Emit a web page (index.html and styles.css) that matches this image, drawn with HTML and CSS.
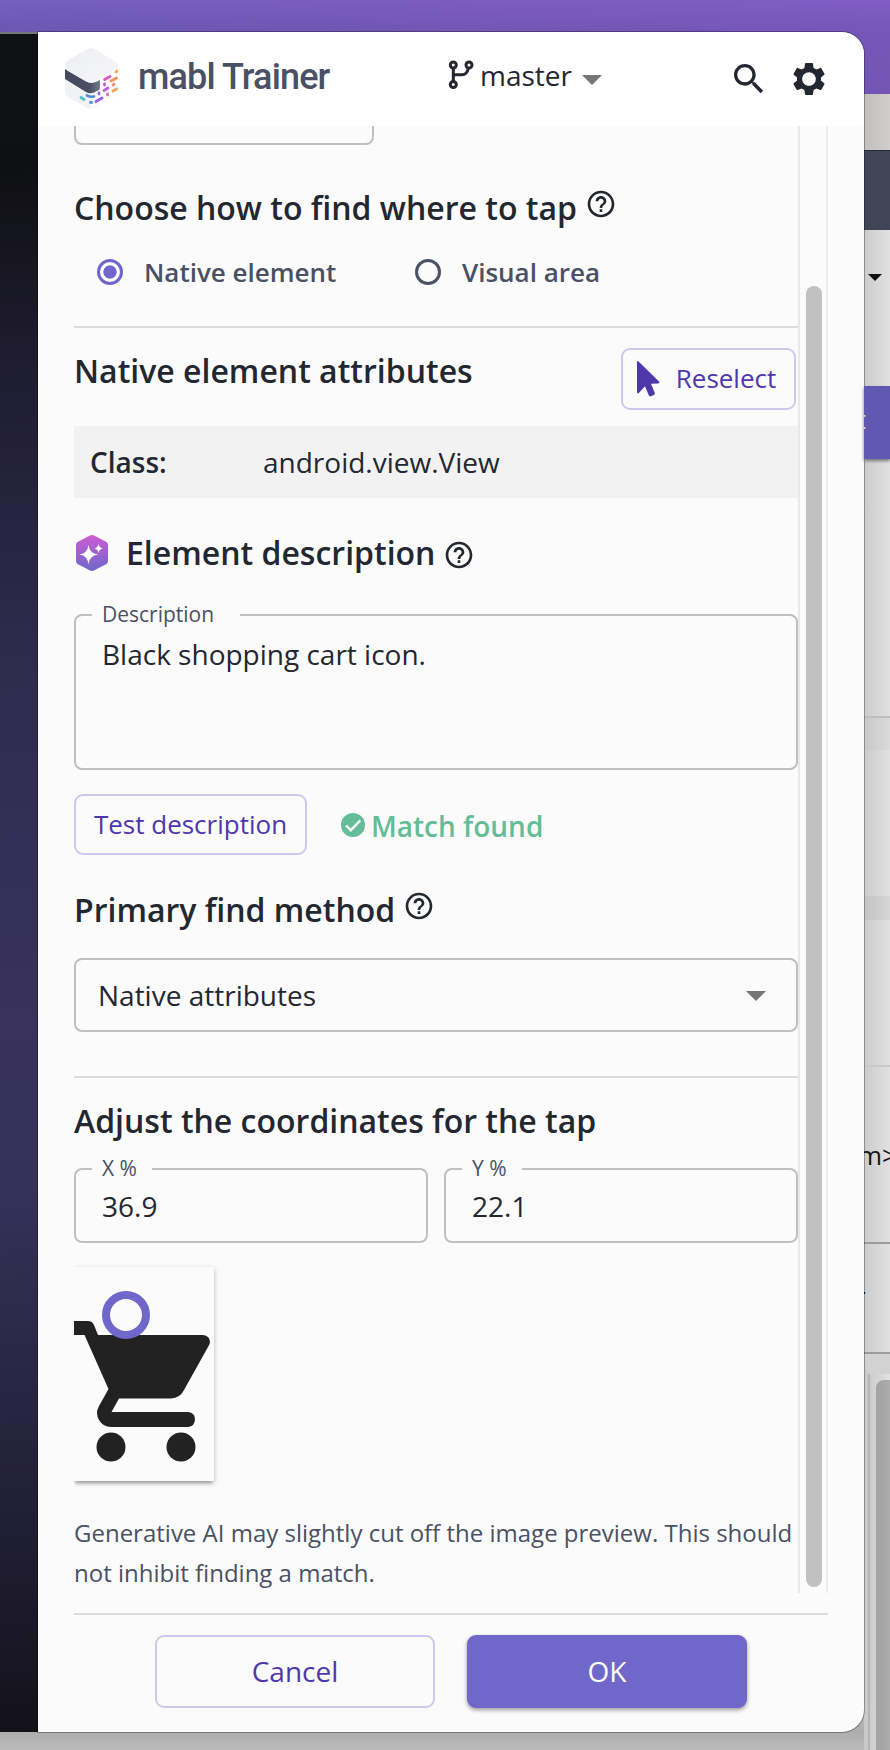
FILE: index.html
```
<!DOCTYPE html>
<html lang="en">
<head>
<meta charset="utf-8">
<title>mabl Trainer</title>
<link rel="stylesheet" href="styles.css">
</head>
<body>
<div class="desktop">
  <div class="back-window">
    <div class="bw-title"></div>
    <div class="bw-nav"></div>
    <div class="bw-row bw-menu"><span class="bw-caret"></span></div>
    <div class="bw-action">t</div>
    <div class="bw-row bw-space"></div>
    <div class="bw-row bw-band"></div>
    <div class="bw-row bw-card-a"></div>
    <div class="bw-row bw-band2"></div>
    <div class="bw-row bw-card-b"></div>
    <div class="bw-row bw-code"><span>m&gt;</span></div>
    <div class="bw-row bw-code2"><span>r</span></div>
    <div class="bw-row bw-scroll"><span></span></div>
  </div>
  <div class="device"></div>

  <main class="trainer">
    <header class="topbar">
      <svg class="logo" width="54" height="62" viewBox="0 0 54 62">
        <defs>
          <linearGradient id="top" x1="0" y1="0" x2="1" y2="1"><stop offset="0" stop-color="#eceef2"/><stop offset="1" stop-color="#f7f7fa"/></linearGradient>
          <linearGradient id="band" x1="0" y1="0" x2="1" y2="0"><stop offset="0" stop-color="#434a5d"/><stop offset=".7" stop-color="#4a5064"/><stop offset="1" stop-color="#73798a"/></linearGradient>
        </defs>
        <path d="M1 31 L27 45 V61 Q25 61 22 59 L4 49 Q1 47 1 44Z" fill="#f0f2f4"/>
        <path d="M27 45 L54 20 V45 Q53 48 49 50 L31 60 Q29 61 27 61Z" fill="#fbfbfc"/>
        <path d="M1 21 L22 33 Q28 37 36 32 V40 Q36 42 33 43 Q27 47 22 44 L1 31Z" fill="url(#band)"/>
        <path d="M23 1.500 Q27 -1 31 1.500 L51 13 Q54 15 54 17 Q54 20 51 22 L32 33.500 Q27 36 22 33.500 L4 23 Q1 21 1 17 Q1 14 4 12Z" fill="url(#top)"/>
        <g fill="none" stroke-width="2.800" stroke-linecap="round">
          <path d="M40.500 31.500 L46 28.500" stroke="#dc5bbd"/><path d="M52 24 L53 23" stroke="#f2a65e"/>
          <path d="M47 33 L52.500 30" stroke="#f09661"/><path d="M40.500 37 V36" stroke="#c95bd6"/>
          <path d="M40 42.500 L44 40" stroke="#c45cda"/><path d="M49 37 L50 36" stroke="#f08b75"/>
          <path d="M49 43 L52.500 41" stroke="#f1a160"/><path d="M43.500 47 V46" stroke="#da6eb8"/>
          <path d="M35 46 V45" stroke="#9567d9"/><path d="M32 53.500 L38 50" stroke="#9463dc"/>
          <path d="M23 47.500 Q27 49.500 30 48.500" stroke="#548bd6"/><path d="M17 49.500 L20 51.500" stroke="#53c2ca"/>
          <path d="M26.500 54.500 H27.500" stroke="#5695d2"/>
        </g>
      </svg>
      <h1 class="brand">mabl Trainer</h1>
      <div class="branch">
        <svg width="26" height="30" viewBox="0 0 26 30" fill="none" stroke="#232730" stroke-width="3">
          <circle cx="5.300" cy="5" r="3"/><circle cx="21" cy="5" r="3"/><circle cx="5.300" cy="24.500" r="3"/>
          <path d="M5.300 8 V21.500 M5.300 14.700 H14 Q19 14.700 20.500 8"/>
        </svg>
        <span class="branch-name">master</span>
        <span class="caret"></span>
      </div>
      <svg class="search" width="40" height="40" viewBox="0 0 24 24" fill="#232730"><path d="M15.500 14h-.79l-.28-.27C15.410 12.590 16 11.110 16 9.500 16 5.910 13.090 3 9.500 3S3 5.910 3 9.500 5.910 16 9.500 16c1.610 0 3.090-.59 4.230-1.570l.27.28v.79l5 4.990L20.490 19l-4.990-5zm-6 0C7.010 14 5 11.990 5 9.500S7.010 5 9.500 5 14 7.010 14 9.500 11.990 14 9.500 14z"/></svg>
      <svg class="gear" width="40" height="40" viewBox="0 0 24 24" fill="#232730"><path d="M19.140 12.940c.04-.3.060-.61.060-.94 0-.32-.02-.64-.07-.94l2.030-1.580c.18-.14.230-.41.120-.61l-1.920-3.320c-.12-.22-.37-.29-.59-.22l-2.390.96c-.5-.38-1.030-.7-1.620-.94l-.36-2.540c-.04-.24-.24-.41-.48-.41h-3.840c-.24 0-.43.17-.47.41l-.36 2.540c-.59.24-1.130.57-1.620.94l-2.390-.96c-.22-.08-.47 0-.59.22L2.740 8.870c-.12.210-.08.470.12.610l2.030 1.580c-.05.3-.09.630-.09.940s.02.640.07.940l-2.030 1.580c-.18.14-.23.410-.12.610l1.920 3.320c.12.220.37.290.59.220l2.390-.96c.5.380 1.030.7 1.620.94l.36 2.540c.05.240.24.410.48.410h3.840c.24 0 .44-.17.47-.41l.36-2.540c.59-.24 1.130-.56 1.620-.94l2.390.96c.22.080.47 0 .59-.22l1.920-3.320c.12-.22.070-.47-.12-.61l-2.010-1.580zM12 16.100c-2.260 0-4.100-1.840-4.100-4.100s1.840-4.100 4.100-4.100 4.100 1.840 4.100 4.100-1.840 4.100-4.100 4.100z"/></svg>
    </header>

    <div class="scroll-area">
      <div class="content">
        <div class="cut-select"></div>
        <h2 class="heading h-find"><span>Choose how to find where to tap</span><svg class="help raised" viewBox="0 0 24 24"><use href="#help"/></svg></h2>
        <div class="radios">
          <label class="radio on"><i></i><span>Native element</span></label>
          <label class="radio"><i></i><span>Visual area</span></label>
        </div>
        <hr>
        <div class="attr-head">
          <h2 class="heading h-attr">Native element attributes</h2>
          <button class="btn reselect"><svg width="24" height="37" viewBox="0 0 24 37" fill="#4e37ab"><path d="M1 2.500 Q1 0 2.800 1.800 L23 21.500 Q24 23.300 22 23.400 L15 23.700 L18.800 33 Q19.200 34.300 18 34.900 L14.800 36.200 Q13.500 36.700 12.900 35.400 L9 26.200 L3 32.800 Q1 34.500 1 32Z"/></svg><span>Reselect</span></button>
        </div>
        <div class="class-row"><span class="key">Class:</span><span class="val">android.view.View</span></div>
        <h2 class="heading h-desc">
          <svg class="hex" width="34" height="38" viewBox="0 0 34 38"><defs><linearGradient id="hex" x1="0" y1="0" x2="0" y2="1"><stop offset="0" stop-color="#cf5bd2"/><stop offset="1" stop-color="#6c68cb"/></linearGradient></defs><path d="M14.500 1.700 Q17 .3 19.500 1.700 L31.500 8 Q33 9 33 11 V27 Q33 29 31.500 30 L19.500 36.300 Q17 37.700 14.500 36.300 L2.500 30 Q1 29 1 27 V11 Q1 9 2.500 8Z" fill="url(#hex)"/><path d="M13.500 11 Q14.500 19.500 23 20.500 Q14.500 21.500 13.500 30 Q12.500 21.500 4.500 20.500 Q12.500 19.500 13.500 11ZM23.500 10 Q24.200 13.800 28 14.500 Q24.200 15.200 23.500 19 Q22.800 15.200 19.500 14.500 Q22.800 13.800 23.500 10Z" fill="#fff"/></svg>
          <span>Element description</span><svg class="help" viewBox="0 0 24 24"><use href="#help"/></svg>
        </h2>
        <fieldset class="field area"><legend class="leg-desc"><span>Description</span></legend><div class="value">Black shopping cart icon.</div></fieldset>
        <div class="test-row">
          <button class="btn test"><span>Test description</span></button>
          <svg width="24" height="24" viewBox="0 0 24 24"><circle cx="12" cy="12" r="12" fill="#63bd96"/><path d="M5 12.500 L9.800 17.200 L19.300 7.300" fill="none" stroke="#fff" stroke-width="2.400"/></svg>
          <span class="match">Match found</span>
        </div>
        <h2 class="heading h-method"><span>Primary find method</span><svg class="help raised" viewBox="0 0 24 24"><use href="#help"/></svg></h2>
        <div class="select"><span>Native attributes</span><i class="caret"></i></div>
        <hr class="hr-coords">
        <h2 class="heading h-coords">Adjust the coordinates for the tap</h2>
        <div class="coords">
          <fieldset class="field"><legend class="leg-x"><span>X %</span></legend><div class="value">36.9</div></fieldset>
          <fieldset class="field"><legend class="leg-x"><span>Y %</span></legend><div class="value">22.1</div></fieldset>
        </div>
        <div class="preview-clip">
          <svg class="preview" width="140" height="214" viewBox="0 0 140 214">
            <path d="M0 54 H14 Q18 54 20 58 L24 68 H129 Q136 69 136 75 Q136 77 134 80 L110 123 Q106 131 97 131.500 H45 L37.500 145 H114 Q121 146 121 152 Q121 159 114 160 H37 Q29 160 25 153 Q21 146 25 139 L34.500 122 L10.500 68 H0Z" fill="#222"/>
            <circle cx="37" cy="180" r="14.500" fill="#222"/><circle cx="107" cy="180" r="14.500" fill="#222"/>
            <circle cx="52" cy="48" r="20" fill="#fbfbfb" stroke="#6f67c9" stroke-width="8"/>
          </svg>
        </div>
        <p class="note">Generative AI may slightly cut off the image preview. This should<br>not inhibit finding a match.</p>
      </div>
      <div class="track"><div class="thumb"></div></div>
    </div>

    <footer class="actions">
      <button class="btn cancel"><span>Cancel</span></button>
      <button class="btn ok"><span>OK</span></button>
    </footer>
  </main>
</div>
<svg class="symbols" width="0" height="0"><symbol id="help" viewBox="0 0 24 24"><path d="M11 18h2v-2h-2v2zm1-16C6.480 2 2 6.480 2 12s4.480 10 10 10 10-4.480 10-10S17.520 2 12 2zm0 18c-4.410 0-8-3.590-8-8s3.590-8 8-8 8 3.590 8 8-3.590 8-8 8zm0-14c-2.210 0-4 1.790-4 4h2c0-1.100.9-2 2-2s2 .9 2 2c0 2-3 1.750-3 5h2c0-2.250 3-2.500 3-5 0-2.210-1.790-4-4-4z"/></symbol></svg>
</body>
</html>
```
FILE: styles.css
```
* { box-sizing: border-box; }
body { margin: 0; font-family: "Open Sans", "Noto Sans", sans-serif; color: #232730; }
h1, h2, p { margin: 0; }
button { font-family: inherit; padding: 0; }
svg { flex: none; display: block; }
.symbols { position: absolute; }

.desktop { position: relative; width: 890px; height: 1750px; overflow: hidden; background: linear-gradient(180deg, rgba(60,50,120,0) 0, rgba(60,50,120,.16) 32px, rgba(60,50,120,.2) 94px), linear-gradient(90deg, #745fbe 0, #7b5dbf 50%, #805ec3 100%); }
.device { position: absolute; left: 0; top: 32px; width: 60px; height: 1700px; border-top: 2px solid #77777a; background: linear-gradient(178deg, #101114 0, #0f1013 8%, #1d1b2c 18%, #2f2c50 38%, #38325c 58%, #35315a 68%, #211f34 87%, #13121a 100%); }

.back-window { position: absolute; left: 0; top: 94px; width: 890px; height: 1656px; padding-left: 864px; display: flex; flex-direction: column; background: linear-gradient(180deg, #c8c8c8 0, #c8c8c8 1600px, #adadad 1638px, #bbb 100%); }
.bw-title { height: 56px; background: linear-gradient(90deg, #c0bfbe, #cfcecc); }
.bw-nav { height: 80px; border-top: 1px solid #252a35; background: #3f4555; }
.bw-row { background: linear-gradient(90deg, #cbcbcb, #e1e1e1); }
.bw-menu { height: 156px; padding: 44px 0 0 4px; }
.bw-caret { display: block; width: 14px; height: 7px; background: #111; clip-path: polygon(0 0, 100% 0, 50% 100%); }
.bw-action { height: 73px; background: #6158b2; box-shadow: 0 2px 3px #777; color: #ddd; font-size: 25px; line-height: 66px; text-indent: -7px; overflow: hidden; z-index: 1; }
.bw-space { height: 257px; }
.bw-band { height: 34px; border-top: 2px solid #bdbdc2; background: linear-gradient(90deg, #c8c8c8, #dadada); }
.bw-card-a { height: 146px; }
.bw-band2 { height: 24px; background: linear-gradient(90deg, #c3c3c3, #d6d6d6); }
.bw-card-b { height: 145px; }
.bw-code { height: 179px; padding-top: 70px; overflow: hidden; border-top: 2px solid #c8c8c8; border-bottom: 2px solid #9c9c9c; font-size: 26px; line-height: 36px; color: #15161a; }
.bw-code span { display: block; margin-left: -6px; white-space: nowrap; }
.bw-code2 { height: 110px; padding-top: 34px; border-bottom: 2px solid #9c9c9c; font-size: 26px; overflow: hidden; }
.bw-code2 span { display: block; margin-left: -9px; }
.bw-scroll { flex: 1; border-top: 20px solid #d2d2d2; padding: 6px 0 0 6px; border-left: 4px solid #cacaca; box-shadow: inset 2px 0 #b5b5b5; }
.bw-scroll span { display: block; width: 20px; height: 100%; margin-left: 2px; border-radius: 8px 0 0 0; background: linear-gradient(90deg, #a2a2a2, #b0b0b0); }

.trainer { position: absolute; left: 38px; top: 32px; width: 826px; height: 1700px; border-radius: 0 22px 22px 0; overflow: hidden; background: #fbfbfb; display: flex; flex-direction: column; }
.desktop::after { content: ""; position: absolute; left: 38px; top: 32px; width: 826px; height: 1700px; border-radius: 0 22px 22px 0; box-shadow: 0 0 0 1px rgba(0,0,0,.3); pointer-events: none; }
.topbar { height: 94px; flex: none; display: flex; align-items: flex-start; background: #fff; }
.logo { margin: 16px 0 0 26px; }
.brand { width: 194px; margin: 22px 0 0 20px; font-family: Roboto, sans-serif; font-size: 36px; line-height: 46px; font-weight: 500; color: #4a5164; white-space: nowrap; letter-spacing: -.85px; }
.branch { display: flex; margin: 28px 0 0 116px; }
.branch-name { margin: -5px 0 0 6px; width: 93px; font-size: 28px; line-height: 40px; }
.caret { width: 20px; height: 10px; background: #757575; clip-path: polygon(0 0, 100% 0, 50% 100%); }
.branch .caret { margin: 15px 0 0 9px; }
.search { margin: 27px 0 0 127px; }
.gear { margin: 27px 0 0 20px; }

.scroll-area { height: 1467px; display: flex; padding-left: 36px; overflow: hidden; flex: none; }
.content { width: 724px; }
.track { width: 30px; border-left: 2px solid #e8e8e8; border-right: 2px solid #ededed; padding: 160px 0 0 6px; }
.thumb { width: 16px; height: 1301px; border-radius: 8px; background: #c1c1c1; }
.cut-select { width: 300px; height: 19px; border: 2px solid #c0c0c0; border-top: 0; border-radius: 0 0 8px 8px; }
.heading { font-size: 32px; line-height: 44px; height: 44px; font-weight: 600; white-space: nowrap; display: flex; }
.help { width: 32px; height: 32px; fill: #232730; }
.h-find { margin-top: 41px; }
.h-find .help, .h-method .help { margin: 2px 0 0 8px; }
.radios { display: flex; height: 36px; margin-top: 24px; padding-left: 23px; font-size: 26px; font-weight: 600; line-height: 36px; color: #4a5164; white-space: nowrap; }
.radio { display: flex; align-items: center; width: 318px; }
.radio i { width: 26px; height: 26px; border: 3px solid #4a5164; border-radius: 50%; margin-right: 21px; }
.radio.on i { border-color: #6f67c9; background: radial-gradient(circle, #6f67c9 6.200px, transparent 7px); }
hr { height: 2px; margin: 36px 0 0; border: 0; background: #dcdcdc; }
.attr-head { display: flex; justify-content: space-between; padding: 20px 2px 0 0; height: 98px; }
.h-attr { margin-top: 1px; }
.btn { display: flex; align-items: center; justify-content: center; border: 2px solid #cdc9ee; border-radius: 9px; background: transparent; color: #4e37ab; font-size: 26px; line-height: 36px; white-space: nowrap; padding-bottom: 2px; }
.reselect { width: 175px; height: 62px; gap: 16px; padding-right: 5px; }
.class-row { height: 72px; background: #f2f2f2; display: flex; padding: 17px 0 0 16px; font-size: 28px; line-height: 38px; }
.key { width: 173px; font-weight: 600; }
.h-desc { margin-top: 33px; }
.hex { margin: 3px 17px 0 1px; }
.h-desc .help { margin: 8px 0 0 8px; }
.field { position: relative; margin: 0; min-width: 0; border: 2px solid #c0c0c0; border-radius: 8px; padding: 0 0 0 26px; }
.field legend { height: 2px; padding: 0; margin-left: -10px; font-size: 21px; line-height: 28px; color: #4a5164; }
.field legend span { display: block; margin: -14px 0 0 10px; }
.leg-desc { width: 148px; }
.leg-x { width: 60px; }
.area { margin-top: 39px; height: 156px; }
.value { font-size: 28px; line-height: 38px; padding-top: 19px; }
.test-row { display: flex; margin-top: 24px; height: 61px; }
.test { width: 233px; height: 61px; }
.test-row svg { margin: 19px 6px 0 34px; }
.match { color: #63bd96; font-size: 28px; line-height: 38px; font-weight: 600; margin-top: 13px; }
.h-method { margin-top: 33px; }
.select { margin-top: 26px; height: 74px; border: 2px solid #c0c0c0; border-radius: 8px; display: flex; justify-content: space-between; align-items: center; padding: 0 30px 0 22px; font-size: 28px; }
.select .caret { margin-top: 2px; }
.hr-coords { margin-top: 44px; }
.h-coords { margin-top: 21px; }
.coords { display: grid; grid-template-columns: 354px 354px; gap: 16px; margin-top: 25px; }
.coords .field { height: 75px; }
.coords .value { padding-top: 17px; }
.preview-clip { overflow: hidden; padding: 24px 12px 16px 0; }
.preview { background: #fbfbfb; box-shadow: 0 2px 5px rgba(0,0,0,.28), 0 4px 3px -2px rgba(0,0,0,.2); }
.note { margin-top: 16px; font-size: 24px; line-height: 40px; color: #4a5164; white-space: nowrap; }
.actions { width: 754px; margin: 20px 0 0 36px; border-top: 2px solid #dcdcdc; display: flex; justify-content: center; gap: 32px; padding-top: 20px; }
.actions .btn { width: 280px; height: 73px; font-size: 28px; }
.actions .ok { background: #6f67c9; border-color: #6f67c9; color: #fff; box-shadow: 0 2px 4px rgba(0,0,0,.4); }
```
